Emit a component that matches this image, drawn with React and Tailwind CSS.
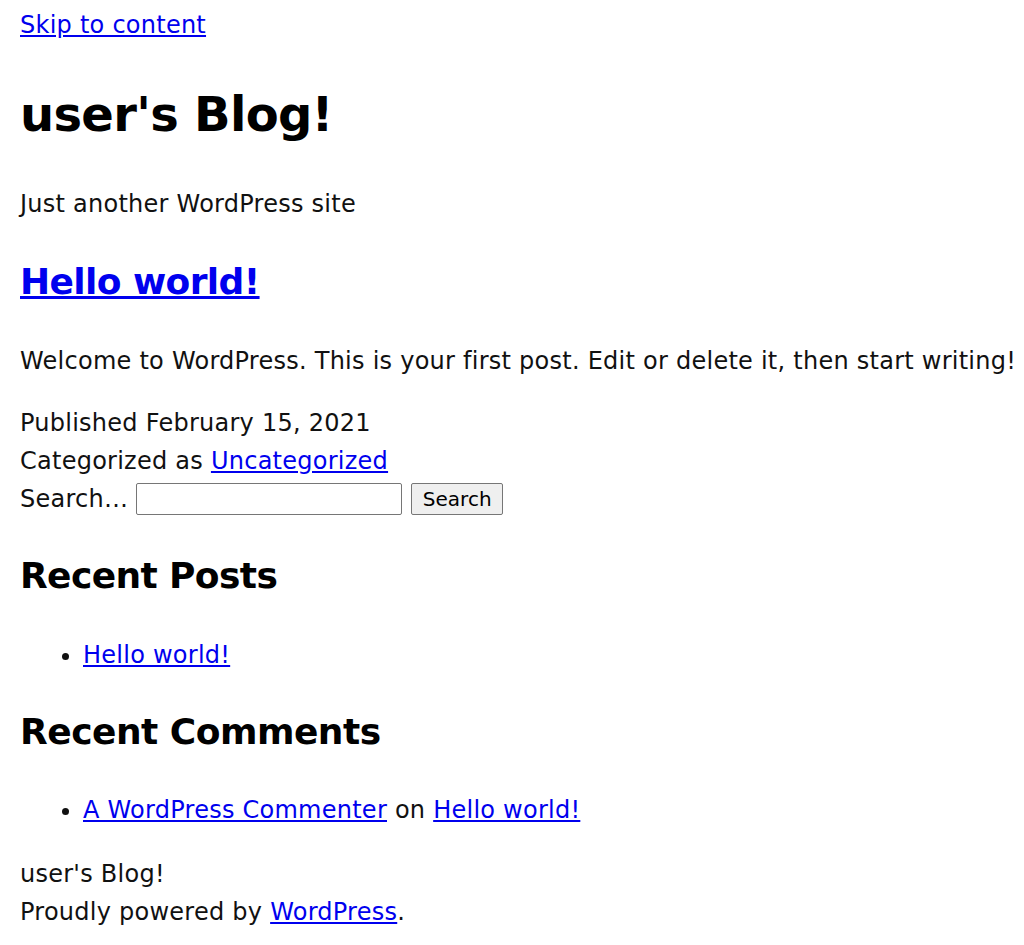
export default function App() {
  const link = "text-[#0000ee] underline";
  return (
    <div className="min-h-[945px] bg-white pl-5 text-[24px] leading-[38px] tracking-[0.25px] text-[#111]" style={{ fontFamily: '"DejaVu Sans", "Noto Sans CJK JP", sans-serif' }}>
      <div className="pt-[6px]">
        <a href="#" className={link}>Skip to content</a>
      </div>
      <h1 className="mt-[40px] text-[48px] font-bold leading-[60px] tracking-[-0.7px] text-black">user's Blog!</h1>
      <p className="mt-[41px]">Just another WordPress site</p>
      <h2 className="mt-[34px] text-[36px] font-bold leading-[50px] tracking-[-0.6px]">
        <a href="#" className={link}>Hello world!</a>
      </h2>
      <p className="mt-[35px] whitespace-nowrap">Welcome to WordPress. This is your first post. Edit or delete it, then start writing!</p>
      <div className="mt-[24px]">
        <div>Published February 15, 2021</div>
        <div>Categorized as <a href="#" className={link}>Uncategorized</a></div>
      </div>
      <div className="flex items-center gap-[8px]">
        <span>Search…</span>
        <input className="h-[32px] w-[266px] border border-[#767676] rounded-[2px] bg-white" />
        <button className="ml-[1px] h-[32px] w-[92px] rounded-[2px] border border-[#767676] bg-[#efefef] text-[20px] leading-[30px] tracking-normal text-black">Search</button>
      </div>
      <h2 className="mt-[33px] text-[36px] font-bold leading-[50px] tracking-[-0.6px] text-black">Recent Posts</h2>
      <ul className="mt-[35px] list-disc pl-[63px]">
        <li><a href="#" className={link}>Hello world!</a></li>
      </ul>
      <h2 className="mt-[33px] text-[36px] font-bold leading-[50px] tracking-[-0.5px] text-black">Recent Comments</h2>
      <ul className="mt-[34px] list-disc pl-[63px]">
        <li><a href="#" className={link}>A WordPress Commenter</a> on <a href="#" className={link}>Hello world!</a></li>
      </ul>
      <div className="mt-[26px]">
        <div>user's Blog!</div>
        <div>Proudly powered by <a href="#" className={link}>WordPress</a>.</div>
      </div>
    </div>
  );
}
